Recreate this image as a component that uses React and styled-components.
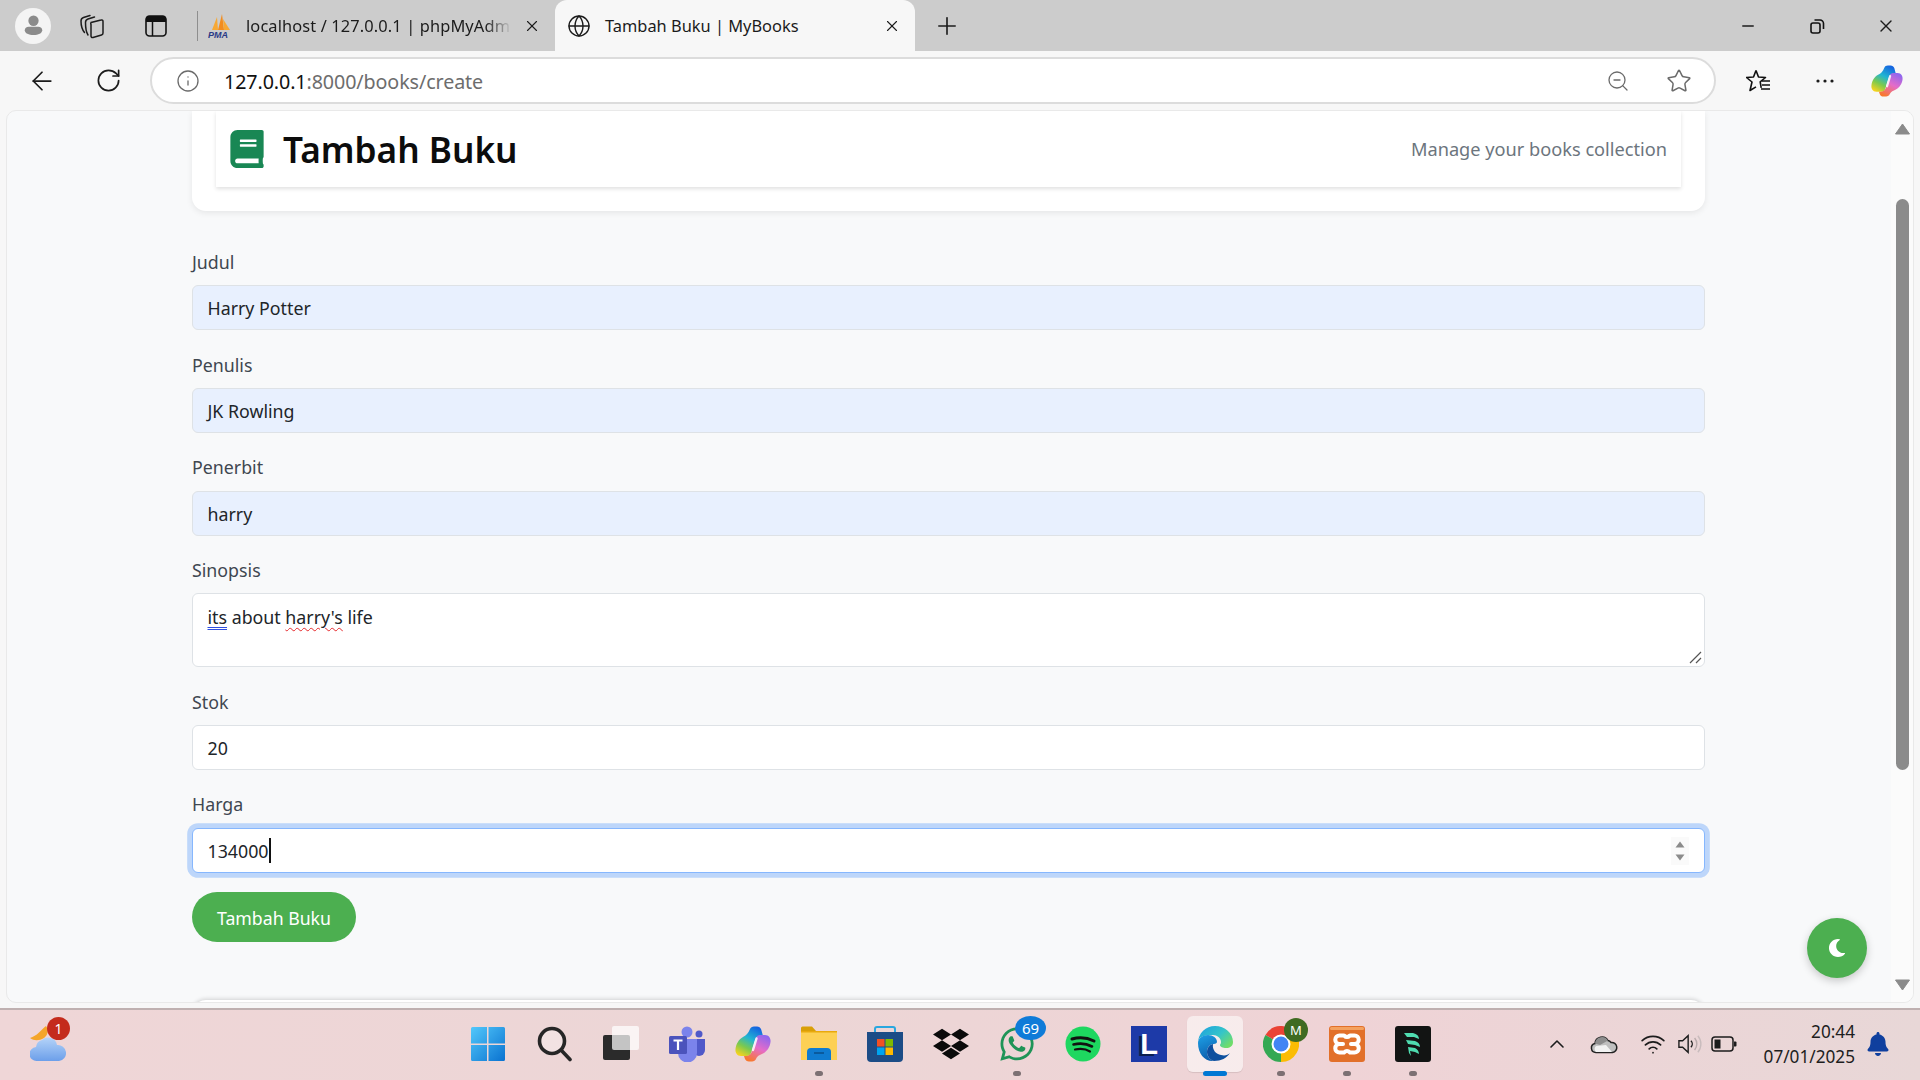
import React from "react";
import styled, { createGlobalStyle } from "styled-components";
import { ArrowLeft, RotateCw, Info, ZoomOut, Star, X, Plus, Minus, Globe, ChevronUp, Wifi } from "lucide-react";
import { FaBook, FaMoon, FaDropbox, FaWhatsapp, FaBell } from "react-icons/fa";

const Global = createGlobalStyle`
  html, body { margin: 0; padding: 0; height: 100%; overflow: hidden; background: #f7f7f7; }
  * { box-sizing: border-box; }
  #root { height: 100%; }
`;

const SANS = `"Noto Sans", "Open Sans", sans-serif`;

const Screen = styled.div`
  width: 1920px; height: 1080px; display: flex; flex-direction: column;
  background: #f7f7f7; font-family: ${SANS}; color: #212529;
`;
const TabStrip = styled.div`
  height: 51px; background: #cccccc; display: flex; align-items: stretch; padding-left: 3px;
`;
const Slot = styled.div`
  width: ${(p) => p.$w}px; flex: none; display: flex; align-items: center; justify-content: center; color: #1c1c1c;
`;
const Avatar = styled.div`
  width: 36px; height: 36px; border-radius: 50%; background: #f4f4f4; display: flex; align-items: center; justify-content: center;
`;
const Separator = styled.div`
  width: 1px; height: 30px; background: #8e8e8e; align-self: center; margin: 0 0 0 6px;
`;
const Tab = styled.div`
  flex: none; width: ${(p) => p.$w}px; display: flex; align-items: center; position: relative;
  padding: 0 14px 0 ${(p) => (p.$active ? 12 : 10)}px; gap: 14px;
  background: ${(p) => (p.$active ? "#f7f7f7" : "transparent")};
  border-radius: 12px 12px 0 0; color: #1b1b1b;
`;
const TabTitle = styled.div`
  flex: 1; min-width: 0; font-size: 16.4px; white-space: nowrap; letter-spacing: ${(p) => (p.$fade ? "0.12px" : "0")};
  ${(p) => p.$fade && `-webkit-mask-image: linear-gradient(90deg,#000 91%,transparent 101%);`}
`;
const Spacer = styled.div`flex: 1;`;
const Toolbar = styled.div`
  height: 59px; display: flex; align-items: center; padding: 0 3px 0 9px; background: #f7f7f7;
`;
const AddressBar = styled.div`
  flex: 1; height: 47px; margin: 0 10px 0 9px; background: #fff; border: 2px solid #dcdcdc; border-radius: 24px;
  display: flex; align-items: center; padding: 0 22px 0 24px; color: #6b6b6b;
`;
const Url = styled.div`
  flex: 1; margin-left: 24px; padding-top: 2px; font-size: 19.7px; color: #6d6d6d; letter-spacing: -0.1px;
  b { font-weight: 400; color: #111; }
`;
const AddressGap = styled.div`width: 36px;`;
const Viewport = styled.div`
  position: relative; height: 893px; margin: 0 6px; background: #f8f9fa; border: 1px solid #e9e9e9; border-radius: 10px;
  display: flex; overflow: hidden;
`;
const Page = styled.div`
  flex: 1; min-width: 0; padding: 0 186px 0 185px; display: flex; flex-direction: column;
`;
const HeaderCard = styled.header`
  height: 100px; flex: none; padding: 0 24px; background: #fff; border-radius: 0 0 14px 14px;
  box-shadow: 0 2px 6px rgba(0,0,0,.08); margin-bottom: 36px;
`;
const HeaderInner = styled.div`
  height: 76px; background: #fff; box-shadow: 0 2px 4px rgba(0,0,0,.12); display: flex; align-items: center; padding: 0 14px 0 12px; gap: 17px;
`;
const Title = styled.h1`
  margin: 0; padding-top: 1px; font-size: 35.2px; font-weight: 600; color: #0c0c0c; flex: 1; line-height: 1;
`;
const Subtitle = styled.div`
  font-size: 18.2px; color: #6c757d;
`;
const Group = styled.div`margin-bottom: 19.25px;`;
const Label = styled.div`
  height: 28.8px; line-height: 30.8px; margin-bottom: 9.6px; color: #3f4750; font-size: 17.8px;
`;
const Field = styled.div`
  position: relative; height: ${(p) => (p.$tall ? 74 : 45)}px; padding: ${(p) => (p.$tall ? "9px" : "0")} 14.5px;
  display: ${(p) => (p.$tall ? "block" : "flex")}; align-items: center;
  border-radius: 6px; border: 1px solid ${(p) => (p.$focus ? "#86b7fe" : "#dee2e6")};
  background: ${(p) => (p.$filled ? "#e8f0fe" : "#fff")};
  ${(p) => p.$focus && `box-shadow: 0 0 0 4.8px rgba(13,110,253,.25);`}
  color: #212529; font-size: 17.8px; line-height: 29px;
`;
const FieldText = styled.span`position: relative; top: 1px;`;
const Caret = styled.span`
  display: inline-block; width: 2px; height: 25px; background: #111; margin-left: 0;
`;
const Blue = styled.span`text-decoration: underline double #2f4fe0 1px; text-underline-offset: 3px;`;
const Red = styled.span`text-decoration: underline wavy #e5282b 1px; text-underline-offset: 3px;`;
const Spinner = styled.div`
  position: absolute; right: 15px; top: 8px; width: 18px; height: 28px; background: #fafafa;
  display: flex; flex-direction: column; align-items: center; justify-content: center; gap: 6px;
`;
const Grip = styled.svg`position: absolute; right: 2px; bottom: 2px;`;
const SubmitButton = styled.div`
  width: 164px; height: 50px; border-radius: 25px; background: #4caf50; color: #fff; flex: none;
  display: flex; align-items: center; justify-content: center; font-size: 17.7px; margin-bottom: 58px; padding-top: 2px;
`;
const NextCard = styled.div`
  height: 30px; flex: none; background: #fff; border-radius: 14px 14px 0 0; box-shadow: 0 -1px 4px rgba(0,0,0,.16);
`;
const ScrollBar = styled.div`
  width: 22px; flex: none; background: #fbfbfb; display: flex; flex-direction: column; align-items: center; padding: 12px 0 11px;
`;
const Thumb = styled.div`
  width: 13px; height: 571px; border-radius: 7px; background: #8b8b8b; margin: 64px 0 0;
`;
const ScrollSpacer = styled.div`flex: 1;`;
const ThemeToggle = styled.div`
  position: absolute; right: 46px; bottom: 24px; width: 60px; height: 60px; border-radius: 50%; background: #4caf50;
  color: #fff; display: flex; align-items: center; justify-content: center; box-shadow: 0 3px 8px rgba(0,0,0,.2);
`;
const Gap = styled.div`height: 5px; flex: none;`;
const Taskbar = styled.footer`
  height: 72px; flex: none; display: flex; border-top: 2px solid #bfb0b0;
  background: linear-gradient(90deg, #efd6d7 0%, #ecd6d6 40%, #efd3d6 70%, #e8d7d7 100%);
`;
const WeatherSlot = styled.div`
  width: 456px; flex: none; padding: 0 0 2px 30px; display: flex; align-items: center; position: relative;
`;
const WeatherBox = styled.div`position: relative; width: 36px; height: 36px;`;
const Badge = styled.div`
  position: absolute; color: #fff; display: flex; align-items: center; justify-content: center; border-radius: 50%;
  top: ${(p) => p.$top}px; right: ${(p) => p.$right}px; width: ${(p) => p.$w}px; height: ${(p) => p.$h}px; background: ${(p) => p.$bg};
  font-size: ${(p) => p.$size}px;
`;
const Dock = styled.div`display: flex; width: 990px; flex: none;`;
const DockItem = styled.div`
  position: relative; width: 66px; height: 70px; display: flex; align-items: center; justify-content: center;
  padding-bottom: 2px;
`;
const Running = styled.div`
  position: absolute; bottom: 4px; left: 50%; transform: translateX(-50%); height: 5px; border-radius: 3px;
  width: ${(p) => (p.$active ? 24 : 8)}px; background: ${(p) => (p.$active ? "#0078d4" : "#7c7073")};
`;
const Highlight = styled.div`
  position: absolute; left: 5px; top: 6px; width: 56px; height: 56px; border-radius: 6px; background: rgba(255,255,255,.55);
  box-shadow: 0 1px 1px rgba(0,0,0,.1);
`;
const IconBox = styled.div`position: relative; width: 36px; height: 36px; display: flex; align-items: center; justify-content: center;`;
const LTile = styled.div`
  width: 36px; height: 36px; background: #1d3aa8; color: #fff; font-family: "Liberation Sans", sans-serif; font-weight: 700;
  font-size: 29px; display: flex; align-items: center; justify-content: center; text-shadow: -3px 2px 0 #0a1f4f;
`;
const Tray = styled.div`display: flex; margin-left: 88px; align-items: center; padding-bottom: 2px; color: #1c1c1c;`;
const Clock = styled.div`
  width: 109px; text-align: right; font-size: 17.2px; line-height: 25px; color: #1e1e1e;
  white-space: nowrap;
`;

const Collections = () => (
  <svg width="26" height="26" viewBox="0 0 26 26" fill="none" stroke="#1c1c1c" strokeWidth="1.5" strokeLinecap="round">
    <path d="M12 9.500 22 7a1.500 1.500 0 0 1 2 1.500V20a2 2 0 0 1-1.500 2L14 24.500a1.500 1.500 0 0 1-2-1.500V11.500a2 2 0 0 1 0-2z" />
    <path d="M9 22C7 19 6.500 15 6.500 9.500 6.500 7.500 7.500 6.500 9 6l6.500-2" />
    <path d="M5.500 19.500C3 16.500 2 13 2 8c0-2 1-3 2.500-3.500L11 2.500" />
  </svg>
);
const VerticalTabs = () => (
  <svg width="22" height="22" viewBox="0 0 22 22" fill="none">
    <rect x="1" y="1" width="20" height="20" rx="3.500" stroke="#111" strokeWidth="1.600" />
    <path d="M1 3.500A2.500 2.500 0 0 1 3.500 1h15A2.500 2.500 0 0 1 21 3.500V7H1z" fill="#111" />
    <path d="M7.500 7v14" stroke="#111" strokeWidth="1.500" />
  </svg>
);
const Person = () => (
  <svg width="19" height="21" viewBox="0 0 24 26" fill="#8b8b8b">
    <circle cx="12" cy="7" r="6.500" />
    <path d="M1 19c0-3 2-4.500 5-4.500h12c3 0 5 1.500 5 4.500 0 4-5 6-11 6S1 23 1 19z" />
  </svg>
);
const PmaLogo = () => (
  <svg width="24" height="26" viewBox="0 0 24 26">
    <path d="M4 17 9 4l1 13z" fill="#f7a833" />
    <path d="M10 17 14 1l2 16z" fill="#f28c1e" />
    <path d="M16 17 15 6l7 11z" fill="#f7a833" />
    <text x="0" y="25" fontSize="9" fontWeight="700" fontStyle="italic" fontFamily="Liberation Sans, sans-serif" fill="#2a3a86">PMA</text>
  </svg>
);
const Restore = () => (
  <svg width="18" height="18" viewBox="0 0 18 18" fill="none" stroke="#111" strokeWidth="1.600">
    <rect x="3" y="6" width="9" height="10" rx="2" />
    <path d="M6.500 3H12a3.500 3.500 0 0 1 3.500 3.500V12" />
  </svg>
);
const FavList = () => (
  <svg width="26" height="26" viewBox="0 0 26 26" fill="none" stroke="#111" strokeWidth="1.600" strokeLinejoin="round">
    <path d="M10 2.500l2.500 6.500 7 .5-5.300 4.400 1 6" />
    <path d="M10 2.500 7.500 9l-7 .5L6 14l-2 8.500 6-3.600" />
    <path d="M16 13h8M16 17h8M15 21h9" />
  </svg>
);
const CopilotIcon = ({ size = 36, id = "c" }) => (
  <svg width={size} height={size} viewBox="0 0 36 36">
    <defs>
      <linearGradient id={`${id}a`} x1="0.7" y1="0" x2="0.2" y2="1">
        <stop offset="0" stopColor="#1565e0" />
        <stop offset="0.4" stopColor="#22b5d2" />
        <stop offset="0.7" stopColor="#7cc94e" />
        <stop offset="1" stopColor="#f7d31e" />
      </linearGradient>
      <linearGradient id={`${id}b`} x1="0.8" y1="0" x2="0.3" y2="1">
        <stop offset="0" stopColor="#8a66f0" />
        <stop offset="0.5" stopColor="#e56cc9" />
        <stop offset="1" stopColor="#f8782f" />
      </linearGradient>
    </defs>
    <path d="M15 3c.7-1.500 2-2.500 4-2.500h3c2 0 3.500 1 4.200 3L28 10c-3-1-6 0-7.500 3L16 27c-.7 2-2 3-4 3H6c-4 0-6-3.500-5.500-7C1 18 4 13 8 11c3-1.500 5.500-4 7-8z" fill={`url(#${id}a)`} />
    <path d="M21 33c-.7 1.500-2 2.500-4 2.500h-3c-2 0-3.500-1-4.200-3L9 30c3 .5 6-.5 7.500-3.500L21 12c.7-2 2-3 4-3h5c4 0 6 3.500 5.500 7-.5 5-3.500 9.500-7.500 11.500-3 1.500-5.500 2-7 5.500z" fill={`url(#${id}b)`} />
    <path d="M21.500 12.500 18 24" stroke="#fff" strokeOpacity=".85" strokeWidth="2.400" strokeLinecap="round" />
  </svg>
);
const WindowsLogo = () => (
  <svg width="36" height="36" viewBox="0 0 36 36">
    <defs>
      <linearGradient id="win" x1="0" y1="0" x2="1" y2="1">
        <stop offset="0" stopColor="#52c8fb" />
        <stop offset="1" stopColor="#0a72d0" />
      </linearGradient>
    </defs>
    <path d="M1 2.500A1.500 1.500 0 0 1 2.500 1H17v16.500H1zM18.500 1H33.500A1.500 1.500 0 0 1 35 2.500V17.500H18.500zM1 19H17v16H2.500A1.500 1.500 0 0 1 1 33.500zM18.500 19H35v14.500a1.500 1.500 0 0 1-1.500 1.500H18.500z" fill="url(#win)" transform="translate(-1 0)" />
  </svg>
);
const SearchIcon = () => (
  <svg width="36" height="36" viewBox="0 0 36 36" fill="none">
    <circle cx="15" cy="15" r="12.500" fill="rgba(255,255,255,.3)" stroke="#262626" strokeWidth="3.600" />
    <path d="M24.500 24.500 33 33.500" stroke="#262626" strokeWidth="3.600" strokeLinecap="round" />
  </svg>
);
const TaskView = () => (
  <svg width="36" height="36" viewBox="0 0 36 36">
    <rect x="0" y="9" width="27" height="25" rx="2" fill="#2b2b2b" />
    <rect x="9" y="0" width="27" height="24" rx="2" fill="#fff" fillOpacity=".72" />
  </svg>
);
const Teams = () => (
  <svg width="36" height="36" viewBox="0 0 36 36">
    <circle cx="18" cy="6" r="5.500" fill="#7b83eb" />
    <circle cx="30" cy="8" r="3.500" fill="#5059c9" />
    <path d="M24 13h12v11a6 6 0 0 1-12 0z" fill="#5059c9" />
    <path d="M9 13h19v14a9.500 9.500 0 0 1-19 0z" fill="#7b83eb" />
    <rect x="0" y="10" width="18" height="18" rx="1.500" fill="#4b53bc" />
    <path d="M4.500 14.500h9M9 14.500V24" stroke="#fff" strokeWidth="2.200" />
  </svg>
);
const Explorer = () => (
  <svg width="36" height="36" viewBox="0 0 36 36">
    <path d="M0 2a1.500 1.500 0 0 1 1.500-1.500H11l4 4.500H0z" fill="#d99f07" />
    <path d="M0 5h36v29H0z" fill="#fdd054" />
    <path d="M0 5h36v1.500H0z" fill="#e9a90d" />
    <path d="M6 34V26a4 4 0 0 1 4-4h16a4 4 0 0 1 4 4v8z" fill="#0f7bd0" />
    <path d="M13 27h10" stroke="#0a4f8c" strokeWidth="1.500" />
  </svg>
);
const StoreIcon = () => (
  <svg width="36" height="36" viewBox="0 0 36 36">
    <path d="M8 6V3a2 2 0 0 1 2-2h16a2 2 0 0 1 2 2v3" fill="none" stroke="#29a7df" strokeWidth="2" />
    <path d="M0 6h36v26a4 4 0 0 1-4 4H4a4 4 0 0 1-4-4z" fill="#1c4c86" />
    <rect x="10" y="13" width="7.500" height="7.500" fill="#f25022" />
    <rect x="18.500" y="13" width="7.500" height="7.500" fill="#7fba00" />
    <rect x="10" y="21.500" width="7.500" height="7.500" fill="#00a4ef" />
    <rect x="18.500" y="21.500" width="7.500" height="7.500" fill="#ffb900" />
  </svg>
);
const Spotify = () => (
  <svg width="36" height="36" viewBox="0 0 36 36" fill="none">
    <circle cx="18" cy="18" r="17.500" fill="#1ed760" />
    <path d="M7 13c7-2 15-1.500 22 2" stroke="#111" strokeWidth="3" strokeLinecap="round" />
    <path d="M8.500 18.500c6-1.500 13-1 18.500 2" stroke="#111" strokeWidth="2.600" strokeLinecap="round" />
    <path d="M10 23.500c5-1 11-.5 15 2" stroke="#111" strokeWidth="2.200" strokeLinecap="round" />
  </svg>
);
const EdgeIcon = () => (
  <svg width="36" height="36" viewBox="0 0 36 36">
    <defs>
      <linearGradient id="e1" x1="0" y1="0" x2="1" y2="0.7">
        <stop offset="0" stopColor="#1b9de2" />
        <stop offset="0.6" stopColor="#35c5c8" />
        <stop offset="1" stopColor="#6fdc6a" />
      </linearGradient>
      <linearGradient id="e2" x1="0" y1="0" x2="0.3" y2="1">
        <stop offset="0" stopColor="#1ea1e6" />
        <stop offset="1" stopColor="#0c5fae" />
      </linearGradient>
    </defs>
    <path d="M1 17C1 7 9 0 18 0c10 0 18 7 18 16 0 4-3 6-7 6-3 0-6-1-6-3 0-1 1-1 1-3 0-4-4-7-8-7-8 0-15 1-15 8z" fill="url(#e1)" />
    <path d="M1 17c0-5 5-8 10-8 5 0 9 3 9 7 0 1-2 2-3 2-4 0-7 3-7 8 0 4 3 8 7 9C8 36 1 28 1 17z" fill="url(#e2)" />
    <path d="M17 35c-4-1-7-5-7-9 0-4 2-7 6-8-1 6 3 10 8 11 4 1 7 0 9-2-3 5-9 8-16 8z" fill="#0d4f9e" />
  </svg>
);
const Chrome = () => (
  <svg width="36" height="36" viewBox="0 0 36 36">
    <path d="M18 18 2.400 9A18 18 0 0 1 33.600 9z" fill="#ea4335" />
    <path d="M18 18 33.600 9A18 18 0 0 1 18 36z" fill="#fbbc04" />
    <path d="M18 18 18 36A18 18 0 0 1 2.400 9z" fill="#34a853" />
    <circle cx="18" cy="18" r="9.500" fill="#fff" />
    <circle cx="18" cy="18" r="7.500" fill="#4285f4" />
  </svg>
);
const Xampp = () => (
  <svg width="36" height="36" viewBox="0 0 36 36" fill="none">
    <rect x="0" y="0" width="36" height="36" rx="3" fill="#e2702a" />
    <rect x="1" y="1" width="34" height="3" rx="1.500" fill="#f4a25f" />
    <path d="M15 9.500H10.500a4.250 4.250 0 0 0 0 8.500h3.500h-3.500a4.250 4.250 0 0 0 0 8.500H15q3-3 6 0h4.500a4.250 4.250 0 0 0 0-8.500H22h3.500a4.250 4.250 0 0 0 0-8.500H21q-3 3-6 0z" stroke="#fff" strokeWidth="4" strokeLinejoin="round" />
  </svg>
);
const Feather = () => (
  <svg width="36" height="36" viewBox="0 0 36 36">
    <rect width="36" height="36" rx="3" fill="#121413" />
    <path d="M9 7h9c4 1 6 3 6 6l-5-2H12zM11 14l9 1c3 1 5 3 5 6l-5-2-7-1zM13 21l7 1c2 1 4 3 4 6l-4-2-5-1 1 5-2-3z" fill="#4fdcb0" />
  </svg>
);
const Weather = () => (
  <svg width="36" height="36" viewBox="0 0 36 36">
    <defs>
      <linearGradient id="wx" x1="0" y1="0" x2="0" y2="1">
        <stop offset="0" stopColor="#b4d3f8" />
        <stop offset="1" stopColor="#6c9fea" />
      </linearGradient>
    </defs>
    <path d="M16 0C11 4 7 10 0 12c4 3 9 3 14 0 4-3 5-8 2-12z" fill="#f4a52a" />
    <path d="M7 35a7 7 0 0 1-1-14 8 8 0 0 1 6-7 9 9 0 0 1 15 5 8 8 0 0 1 2 16z" fill="url(#wx)" />
  </svg>
);
const Cloud = () => (
  <svg width="28" height="20" viewBox="0 0 28 20">
    <path d="M6 18.500a4.500 4.500 0 0 1-1-8.900 7 7 0 0 1 13-3 5 5 0 0 1 3 1.900 5 5 0 0 1 1.500 10z" fill="#bfbfbf" stroke="#222" strokeWidth="1.500" />
    <path d="M6 18a4 4 0 0 1 0-6l10-1 6 7z" fill="#f2f2f2" />
    <path d="M5 9.500a7 7 0 0 1 13-3L10 11z" fill="#8d8d8d" />
  </svg>
);
const Speaker = () => (
  <svg width="26" height="22" viewBox="0 0 26 22" fill="none" stroke="#1c1c1c" strokeWidth="1.500">
    <path d="M1 7.500h4L11 2v18l-6-5.500H1z" />
    <path d="M14 7.500a5 5 0 0 1 0 7" />
    <path d="M18 4.500a10 10 0 0 1 0 13" stroke="#b8a9aa" />
    <path d="M21.500 2a14 14 0 0 1 0 18" stroke="#c9bcbd" />
  </svg>
);
const BatteryIcon = () => (
  <svg width="26" height="18" viewBox="0 0 26 18" fill="none">
    <rect x="1" y="2" width="21" height="14" rx="3" stroke="#1c1c1c" strokeWidth="1.500" />
    <rect x="3.500" y="4.500" width="6" height="9" fill="#1c1c1c" />
    <path d="M23 6.500h1.500a1 1 0 0 1 1 1v3a1 1 0 0 1-1 1H23z" fill="#1c1c1c" />
  </svg>
);

const SpinArrow = ({ flip }) => (
  <svg width="10" height="7" viewBox="0 0 10 7" style={flip ? { transform: "rotate(180deg)" } : undefined}>
    <path d="M5 .5 9.500 6.500H.5z" fill="#8b8b8b" />
  </svg>
);
const ScrollArrow = ({ flip }) => (
  <svg width="15" height="12" viewBox="0 0 15 12" style={flip ? { transform: "rotate(180deg)" } : undefined}>
    <path d="M7.500 1 14.500 11H.5z" fill="#8b8b8b" stroke="#8b8b8b" strokeLinejoin="round" />
  </svg>
);

const dockIcons = [
  { icon: <WindowsLogo /> },
  { icon: <SearchIcon /> },
  { icon: <TaskView /> },
  { icon: <Teams /> },
  { icon: <CopilotIcon id="dock" /> },
  { icon: <Explorer />, running: true },
  { icon: <StoreIcon /> },
  { icon: <FaDropbox size={38} color="#0b0b0b" /> },
  { icon: <FaWhatsapp size={38} color="#1f9457" />, running: true, badge: { top: -10, right: -11, w: 31, h: 24, bg: "#0f7bd8", size: 15, text: "69" } },
  { icon: <Spotify /> },
  { icon: <LTile>L</LTile> },
  { icon: <EdgeIcon />, active: true },
  { icon: <Chrome />, running: true, badge: { top: -8, right: -9, w: 24, h: 24, bg: "#3f6b22", size: 13, text: "M" } },
  { icon: <Xampp />, running: true },
  { icon: <Feather />, running: true },
];

export default function App() {
  return (
    <>
      <Global />
      <Screen>
        <TabStrip>
          <Slot $w={60}><Avatar><Person /></Avatar></Slot>
          <Slot $w={58}><Collections /></Slot>
          <Slot $w={70}><VerticalTabs /></Slot>
          <Separator />
          <Tab $w={357}>
            <PmaLogo />
            <TabTitle $fade>localhost / 127.0.0.1 | phpMyAdm</TabTitle>
            <X size={18} strokeWidth={1.5} />
          </Tab>
          <Tab $w={360} $active>
            <Globe size={24} strokeWidth={1.4} />
            <TabTitle>Tambah Buku | MyBooks</TabTitle>
            <X size={18} strokeWidth={1.5} />
          </Tab>
          <Slot $w={64}><Plus size={28} strokeWidth={1.4} /></Slot>
          <Spacer />
          <Slot $w={69}><Minus size={18} strokeWidth={1.8} /></Slot>
          <Slot $w={69}><Restore /></Slot>
          <Slot $w={69}><X size={20} strokeWidth={1.6} /></Slot>
        </TabStrip>
        <Toolbar>
          <Slot $w={66}><ArrowLeft size={30} strokeWidth={1.4} /></Slot>
          <Slot $w={66}><RotateCw size={27} strokeWidth={1.5} /></Slot>
          <AddressBar>
            <Info size={24} strokeWidth={1.3} />
            <Url><b>127.0.0.1</b>:8000/books/create</Url>
            <ZoomOut size={24} strokeWidth={1.3} />
            <AddressGap />
            <Star size={26} strokeWidth={1.4} />
          </AddressBar>
          <Slot $w={66}><FavList /></Slot>
          <Slot $w={65}>
            <svg width="20" height="4" viewBox="0 0 20 4" fill="#1c1c1c"><circle cx="3" cy="2" r="1.600" /><circle cx="10" cy="2" r="1.600" /><circle cx="17" cy="2" r="1.600" /></svg>
          </Slot>
          <Slot $w={60}><CopilotIcon size={32} id="bar" /></Slot>
        </Toolbar>
        <Viewport>
          <Page>
            <HeaderCard>
              <HeaderInner>
                <FaBook size={38} color="#198754" />
                <Title>Tambah Buku</Title>
                <Subtitle>Manage your books collection</Subtitle>
              </HeaderInner>
            </HeaderCard>
            <Group><Label>Judul</Label><Field $filled><FieldText>Harry Potter</FieldText></Field></Group>
            <Group><Label>Penulis</Label><Field $filled><FieldText>JK Rowling</FieldText></Field></Group>
            <Group><Label>Penerbit</Label><Field $filled><FieldText>harry</FieldText></Field></Group>
            <Group>
              <Label>Sinopsis</Label>
              <Field $tall>
                <Blue>its</Blue> about <Red>harry's</Red> life
                <Grip width="14" height="14" viewBox="0 0 14 14" fill="none" stroke="#555" strokeWidth="1.200">
                  <path d="M2 13 13 2M8 13l5-5" />
                </Grip>
              </Field>
            </Group>
            <Group><Label>Stok</Label><Field><FieldText>20</FieldText></Field></Group>
            <Group>
              <Label>Harga</Label>
              <Field $focus>
                <FieldText>134000</FieldText><Caret />
                <Spinner><SpinArrow /><SpinArrow flip /></Spinner>
              </Field>
            </Group>
            <SubmitButton>Tambah Buku</SubmitButton>
            <NextCard />
          </Page>
          <ScrollBar>
            <ScrollArrow />
            <Thumb />
            <ScrollSpacer />
            <ScrollArrow flip />
          </ScrollBar>
          <ThemeToggle><FaMoon size={18} /></ThemeToggle>
        </Viewport>
        <Gap />
        <Taskbar>
          <WeatherSlot>
            <WeatherBox>
              <Weather />
              <Badge $top={-9} $right={-4} $w={23} $h={23} $bg="#c42b1c" $size={14}>1</Badge>
            </WeatherBox>
          </WeatherSlot>
          <Dock>
            {dockIcons.map((d, i) => (
              <DockItem key={i}>
                {d.active && <Highlight />}
                <IconBox>
                  {d.icon}
                  {d.badge && (
                    <Badge $top={d.badge.top} $right={d.badge.right} $w={d.badge.w} $h={d.badge.h} $bg={d.badge.bg} $size={d.badge.size}>{d.badge.text}</Badge>
                  )}
                </IconBox>
                {(d.running || d.active) && <Running $active={d.active} />}
              </DockItem>
            ))}
          </Dock>
          <Tray>
            <Slot $w={46}><ChevronUp size={24} strokeWidth={1.6} /></Slot>
            <Slot $w={48}><Cloud /></Slot>
            <Slot $w={50}><Wifi size={26} strokeWidth={1.6} /></Slot>
            <Slot $w={24}><Speaker /></Slot>
            <Slot $w={44}><BatteryIcon /></Slot>
            <Clock>20:44<br />07/01/2025</Clock>
            <Slot $w={46}><FaBell size={24} color="#0f3f9e" /></Slot>
          </Tray>
        </Taskbar>
      </Screen>
    </>
  );
}
